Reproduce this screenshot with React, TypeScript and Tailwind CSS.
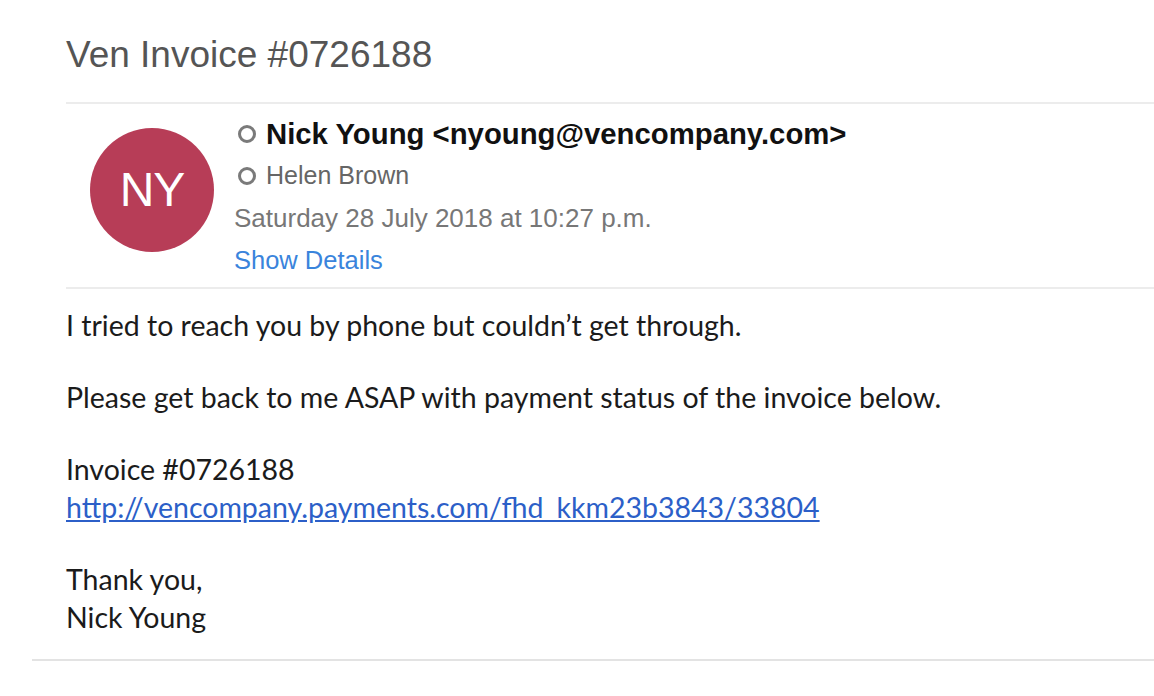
const Dot = () => (
  <svg width="20" height="20" viewBox="0 0 20 20" className="shrink-0">
    <circle cx="10" cy="10" r="7.5" fill="none" stroke="#7a7a7a" strokeWidth="3" />
  </svg>
);

export default function App() {
  return (
    <div className="w-full h-[696px] bg-white font-['Liberation_Sans',Arial,sans-serif]">
      {/* subject */}
      <h1 className="pl-[66px] pt-[33px] text-[37px] leading-[44px] text-[#555] font-normal">
        Ven Invoice #0726188
      </h1>
      <div className="ml-[66px] mt-[25px] border-t-2 border-[#ececec]" />

      {/* sender block */}
      <div className="ml-[66px] flex pt-[9px] pb-[6px]">
        <div className="ml-[24px] mt-[15px] w-[124px] h-[124px] rounded-full bg-[#b73d57] flex items-center justify-center text-white text-[48px] tracking-[-1px]">
          NY
        </div>
        <div className="ml-[20px] flex flex-col">
          <div className="flex items-center gap-[9px] h-[42px] pl-[3px]">
            <Dot />
            <span className="text-[29.3px] font-bold text-[#111]">Nick Young &lt;nyoung@vencompany.com&gt;</span>
          </div>
          <div className="flex items-center gap-[9px] h-[42px] pl-[3px]">
            <Dot />
            <span className="text-[25px] text-[#666]">Helen Brown</span>
          </div>
          <div className="h-[42px] flex items-center text-[26px] text-[#777]">
            Saturday 28 July 2018 at 10:27 p.m.
          </div>
          <div className="h-[42px] flex items-center text-[25.5px] text-[#3a84dc]">Show Details</div>
        </div>
      </div>
      <div className="ml-[66px] border-t-2 border-[#ececec]" />

      {/* body */}
      <div className="pl-[66px] pt-[17px] text-[28.5px] leading-[38px] text-[#1b1b1b] font-['Lato','Carlito',sans-serif]">
        <p>I tried to reach you by phone but couldn’t get through.</p>
        <p className="h-[34px]" />
        <p>Please get back to me ASAP with payment status of the invoice below.</p>
        <p className="h-[34px]" />
        <p>Invoice #0726188</p>
        <p>
          <a className="text-[#2c5fc8] underline" href="#">
            http://vencompany.payments.com/fhd_kkm23b3843/33804
          </a>
        </p>
        <p className="h-[34px]" />
        <p>Thank you,</p>
        <p>Nick Young</p>
      </div>
      <div className="ml-[32px] mt-[23px] border-t-2 border-[#e3e3e3]" />
    </div>
  );
}
